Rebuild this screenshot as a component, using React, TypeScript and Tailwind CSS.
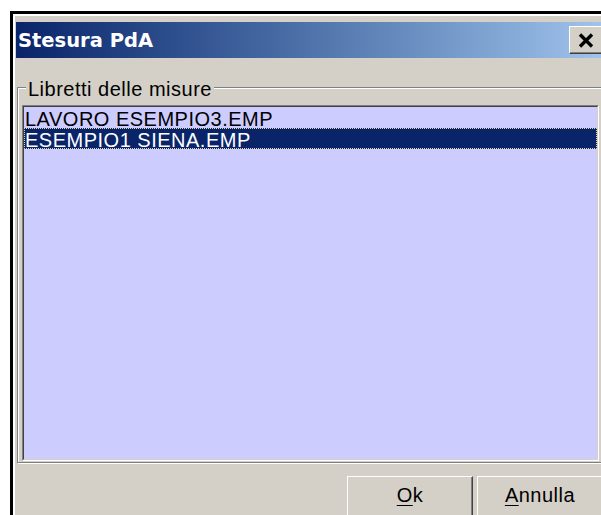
import React from "react";

const sans = { fontFamily: '"Liberation Sans", Arial, sans-serif' };

function CloseGlyph() {
  return (
    <svg width="16" height="15" viewBox="0 0 16 15" className="block">
      <path d="M2 1.5 L14 13.5 M14 1.5 L2 13.5" stroke="#000" strokeWidth="3.4" strokeLinecap="butt" />
    </svg>
  );
}

function WinButton({ label, hot }: { label: string; hot: string }) {
  const rest = label.slice(hot.length);
  return (
    <button className="w-[126px] h-[46px] border border-t-white border-l-white border-r-[#404040] border-b-[#404040] bg-[#d4d0c8] shadow-[inset_-1px_-1px_0_#808080] flex justify-center items-start pt-[8px] text-[20px] leading-[20px] tracking-[0.5px] text-black" style={sans}>
      <span>
        <span className="underline underline-offset-[3px] decoration-1">{hot}</span>
        {rest}
      </span>
    </button>
  );
}

export default function App() {
  const items = ["LAVORO ESEMPIO3.EMP", "ESEMPIO1 SIENA.EMP"];
  const selected = 1;
  return (
    <div className="w-[601px] h-[515px] overflow-hidden bg-white pt-[11px] pl-[10px]">
      <div className="w-[620px] h-[520px] border-[3px] border-black bg-[#d4d0c8]">
        <div className="h-full border-t-2 border-l-2 border-white pt-[6px] pl-[1px] pr-[3px]">
          {/* caption bar */}
          <div className="h-[36px] flex items-center bg-linear-to-r from-[#0a246a] to-[#a6caf0]">
            <span
              className="flex-1 pl-[2px] pt-[2px] text-white font-bold text-[19.5px] leading-[24px]"
              style={{ fontFamily: '"DejaVu Sans", Verdana, sans-serif' }}
            >
              Stesura PdA
            </span>
            <div className="w-[34px] h-[28px] mr-[21px] bg-[#d4d0c8] border border-t-white border-l-white border-r-[#404040] border-b-[#404040] shadow-[inset_-1px_-1px_0_#808080] flex items-center pl-[8px]">
              <CloseGlyph />
            </div>
          </div>

          {/* group box */}
          <div className="relative mt-[29px] ml-[1px] w-[587px] border border-[#808080] shadow-[1px_1px_0_#fff,inset_1px_1px_0_#fff] pt-[17px] pl-[4px] pr-[4px] pb-[1px]">
            <span
              className="absolute -top-[9px] left-[8px] px-[2px] bg-[#d4d0c8] text-[20px] leading-[20px] tracking-[0.5px] text-black"
              style={sans}
            >
              Libretti delle misure
            </span>
            <div className="w-[577px] h-[356px] border border-t-[#808080] border-l-[#808080] border-r-white border-b-white">
              <div className="h-full border border-t-[#404040] border-l-[#404040] border-r-[#d4d0c8] border-b-[#d4d0c8] bg-[#ccccff]">
                {items.map((it, i) => (
                  <div
                    key={it}
                    className={
                      i === selected
                        ? "h-[21px] border border-dotted border-[#e6d79a] bg-[#0a246a] text-white text-[20px] leading-[22px] tracking-[0.5px] whitespace-nowrap"
                        : "h-[21px] border border-transparent text-black text-[20px] leading-[22px] tracking-[0.5px] whitespace-nowrap"
                    }
                    style={sans}
                  >
                    {it}
                  </div>
                ))}
              </div>
            </div>
          </div>

          {/* dialog buttons */}
          <div className="mt-[13px] flex justify-end gap-[4px] pr-[21px]">
            <WinButton label="Ok" hot="O" />
            <WinButton label="Annulla" hot="A" />
          </div>
        </div>
      </div>
    </div>
  );
}
